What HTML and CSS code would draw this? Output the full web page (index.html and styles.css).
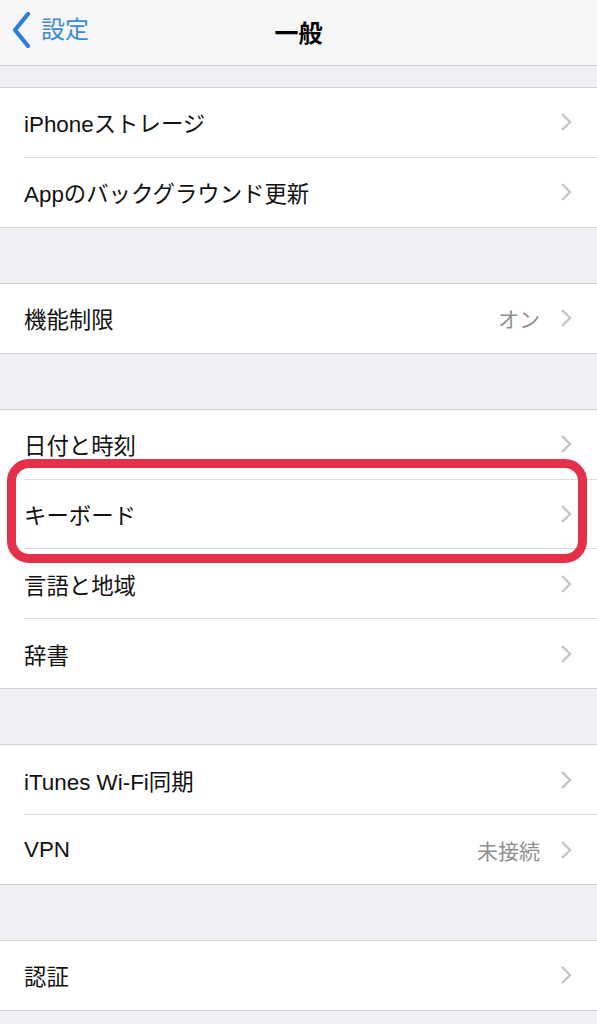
FILE: index.html
```html
<!DOCTYPE html>
<html lang="ja">
<head>
<meta charset="utf-8">
<link rel="stylesheet" href="styles.css">
</head>
<body>
<div class="screen">
  <header class="nav">
    <div class="back">
      <svg class="back-icon" width="20" height="36" viewBox="0 0 20 36"><path d="M16 2 L3 18 L16 34" fill="none" stroke="#2a7fd8" stroke-width="4.2" stroke-linecap="round" stroke-linejoin="round"/></svg>
      <span class="back-text">設定</span>
    </div>
    <div class="title">一般</div>
  </header>

  <div class="group first">
    <div class="row"><span class="label">iPhoneストレージ</span><span class="chev"><svg width="12" height="20" viewBox="0 0 12 20"><path d="M2 2 L10 10 L2 18" fill="none" stroke="#c4c4c9" stroke-width="2.4"/></svg></span></div>
    <div class="row"><span class="label">Appのバックグラウンド更新</span><span class="chev"><svg width="12" height="20" viewBox="0 0 12 20"><path d="M2 2 L10 10 L2 18" fill="none" stroke="#c4c4c9" stroke-width="2.4"/></svg></span></div>
  </div>

  <div class="group">
    <div class="row"><span class="label">機能制限</span><span class="detail">オン</span><span class="chev"><svg width="12" height="20" viewBox="0 0 12 20"><path d="M2 2 L10 10 L2 18" fill="none" stroke="#c4c4c9" stroke-width="2.4"/></svg></span></div>
  </div>

  <div class="group highlight-group">
    <div class="row"><span class="label">日付と時刻</span><span class="chev"><svg width="12" height="20" viewBox="0 0 12 20"><path d="M2 2 L10 10 L2 18" fill="none" stroke="#c4c4c9" stroke-width="2.4"/></svg></span></div>
    <div class="row"><span class="label">キーボード</span><span class="chev"><svg width="12" height="20" viewBox="0 0 12 20"><path d="M2 2 L10 10 L2 18" fill="none" stroke="#c4c4c9" stroke-width="2.4"/></svg></span></div>
    <div class="row"><span class="label">言語と地域</span><span class="chev"><svg width="12" height="20" viewBox="0 0 12 20"><path d="M2 2 L10 10 L2 18" fill="none" stroke="#c4c4c9" stroke-width="2.4"/></svg></span></div>
    <div class="row"><span class="label">辞書</span><span class="chev"><svg width="12" height="20" viewBox="0 0 12 20"><path d="M2 2 L10 10 L2 18" fill="none" stroke="#c4c4c9" stroke-width="2.4"/></svg></span></div>
    <div class="marker"></div>
  </div>

  <div class="group">
    <div class="row"><span class="label">iTunes Wi-Fi同期</span><span class="chev"><svg width="12" height="20" viewBox="0 0 12 20"><path d="M2 2 L10 10 L2 18" fill="none" stroke="#c4c4c9" stroke-width="2.4"/></svg></span></div>
    <div class="row"><span class="label">VPN</span><span class="detail">未接続</span><span class="chev"><svg width="12" height="20" viewBox="0 0 12 20"><path d="M2 2 L10 10 L2 18" fill="none" stroke="#c4c4c9" stroke-width="2.4"/></svg></span></div>
  </div>

  <div class="group">
    <div class="row"><span class="label">認証</span><span class="chev"><svg width="12" height="20" viewBox="0 0 12 20"><path d="M2 2 L10 10 L2 18" fill="none" stroke="#c4c4c9" stroke-width="2.4"/></svg></span></div>
  </div>
</div>
</body>
</html>
```

FILE: styles.css
```css
* { box-sizing: border-box; }
html, body {
  margin: 0;
  padding: 0;
  background: #efeff4;
}
body {
  font-family: "Liberation Sans", "Noto Sans CJK JP", sans-serif;
  color: #111;
  width: 597px;
  height: 1024px;
  overflow: hidden;
}
.screen {
  width: 597px;
  position: relative;
}
.nav {
  height: 66px;
  background: #f7f7f8;
  border-bottom: 1px solid #cfcfd3;
  position: relative;
  display: flex;
  align-items: center;
  justify-content: center;
}
.back {
  position: absolute;
  left: 12px;
  top: 12px;
  display: flex;
  align-items: center;
  gap: 9px;
}
.back-icon { display: block; }
.back-text {
  font-size: 24px;
  color: #3b8ad6;
  line-height: 36px;
}
.title {
  font-size: 24px;
  font-weight: bold;
  color: #000;
  margin-top: -2px;
}
.group {
  background: #fff;
  border-top: 1px solid #d2d2d6;
  border-bottom: 1px solid #d2d2d6;
  margin-top: 55px;
  position: relative;
}
.group.first { margin-top: 21px; }
.row {
  height: 68.9px;
  display: flex;
  align-items: center;
  padding-left: 24px;
  padding-right: 25px;
  position: relative;
}
.row + .row {
  border-top: 1px solid #dadade;
  margin-left: 24px;
  padding-left: 0;
  height: 69.9px;
}
.label {
  font-size: 22.4px;
  flex: 1;
  white-space: nowrap;
}
.detail {
  font-size: 21px;
  color: #8e8e93;
  margin-right: 20px;
}
.chev {
  display: flex;
  align-items: center;
}
.chev svg { display: block; }
.marker {
  position: absolute;
  left: 7px;
  top: 49px;
  width: 580px;
  height: 104px;
  border: 9px solid #e5304a;
  border-radius: 22px;
  pointer-events: none;
}
```
